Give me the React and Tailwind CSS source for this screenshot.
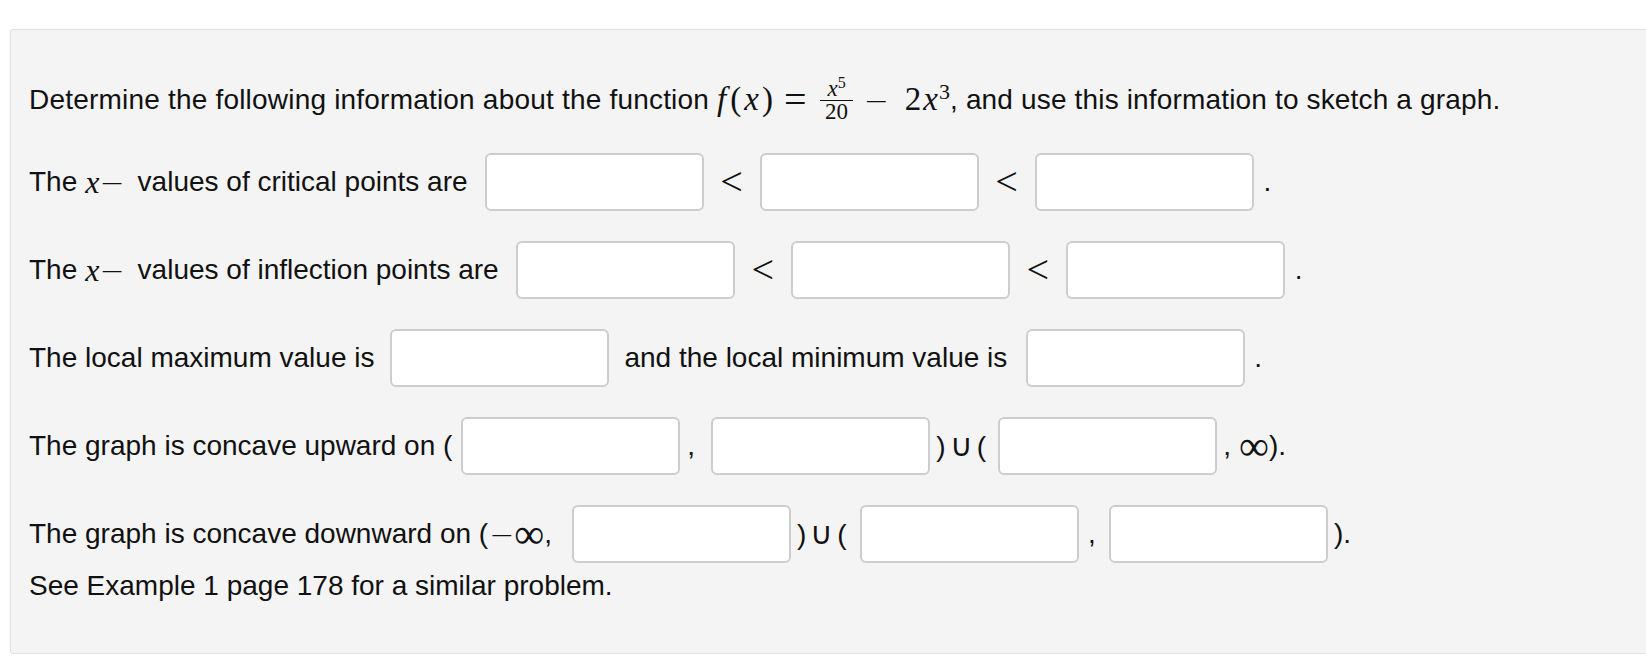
import React from 'react';

// one answer field, as in the reference
function Box({ className = '' }) {
  return (
    <input
      type="text"
      className={`block w-[219px] h-[58px] shrink-0 bg-white border-2 border-[#cdcdcd] rounded-[6px] outline-none ${className}`}
    />
  );
}

function X() {
  return <span className="font-['Liberation_Serif',serif] italic text-[32px]">x</span>;
}

function Minus({ className = '' }) {
  return <span className={`font-['DejaVu_Sans',sans-serif] text-[30px] font-light ${className}`}>−</span>;
}

function Inf() {
  return <span className="font-['Liberation_Serif',serif] text-[42px] leading-none">∞</span>;
}

function Sep({ children, className = '' }) {
  return <span className={`shrink-0 ${className}`}>{children}</span>;
}

const mathCls = "font-['Liberation_Serif',serif] text-[33px]";
const ltCls = "font-['Liberation_Serif',serif] text-[40px] font-light w-[56px] text-center";

function Cup() {
  return (
    <>
      )<span className="font-['Liberation_Serif',serif] text-[31px] mx-[4px]">∪</span>(
    </>
  );
}

export default function App() {
  return (
    <div className="min-h-[662px] bg-white overflow-hidden pt-[29px] pl-[10px] font-['Liberation_Sans',Arial,sans-serif] text-[28px] text-[#111]">
      <div className="bg-[#f4f4f4] border border-r-0 border-[#e1e1e1] rounded-l-[4px] shadow-[0_0_2px_rgba(0,0,0,0.06)] pt-[50px] pb-[47px] pl-[18px] whitespace-nowrap">
        {/* intro line */}
        <div className="flex items-center h-[40px]">
          <span className="tracking-[0.2px]">Determine the following information about the function</span>
          <span className={`${mathCls} ml-[8px]`}>
            <i className="mr-[4px]">f</i>(<i className="mx-[3px]">x</i>)
          </span>
          <span className={`${mathCls} text-[40px] ml-[11px] mr-[14px]`}>=</span>
          <span className="inline-flex flex-col items-center font-['Liberation_Serif',serif] text-[23px] leading-[22px]">
            <span className="border-b-[1.5px] border-[#111] px-[7px]">
              <i>x</i>
              <sup className="text-[16px]">5</sup>
            </span>
            <span>20</span>
          </span>
          <Minus className="ml-[11px] mr-[16px]" />
          <span className={mathCls}>
            2<i className="ml-[2px] mr-[1px]">x</i>
            <sup className="text-[22px]">3</sup>
          </span>
          <span className="tracking-[0.16px]">, and use this information to sketch a graph.</span>
        </div>

        {/* critical points */}
        <div className="flex items-center h-[58px] mt-[33px]">
          <span>The</span>
          <span className="ml-[8px]"><X /></span>
          <Minus className="mr-[13px]" />
          <span>values of critical points are</span>
          <Box className="ml-[17px]" />
          <Sep className={ltCls}>&lt;</Sep>
          <Box />
          <Sep className={ltCls}>&lt;</Sep>
          <Box />
          <Sep className="ml-[10px]">.</Sep>
        </div>

        {/* inflection points */}
        <div className="flex items-center h-[58px] mt-[30px]">
          <span>The</span>
          <span className="ml-[8px]"><X /></span>
          <Minus className="mr-[13px]" />
          <span>values of inflection points are</span>
          <Box className="ml-[17px]" />
          <Sep className={ltCls}>&lt;</Sep>
          <Box />
          <Sep className={ltCls}>&lt;</Sep>
          <Box />
          <Sep className="ml-[10px]">.</Sep>
        </div>

        {/* local extrema */}
        <div className="flex items-center h-[58px] mt-[30px]">
          <span>The local maximum value is</span>
          <Box className="ml-[16px]" />
          <span className="ml-[15px]">and the local minimum value is</span>
          <Box className="ml-[19px]" />
          <Sep className="ml-[9px]">.</Sep>
        </div>

        {/* concave up */}
        <div className="flex items-center h-[58px] mt-[30px]">
          <span>The graph is concave upward on (</span>
          <Box className="ml-[9px]" />
          <Sep className="w-[31px] pl-[7px]">,</Sep>
          <Box />
          <Sep className="w-[68px] pl-[6px]">
            <Cup />
          </Sep>
          <Box />
          <Sep className="ml-[6px] flex items-center">
            ,&nbsp;<Inf />).
          </Sep>
        </div>

        {/* concave down */}
        <div className="flex items-center h-[58px] mt-[30px]">
          <span className="flex items-center">
            The graph is concave downward on (<Minus className="ml-[1px]" />
            <Inf />,
          </span>
          <Box className="ml-[20px]" />
          <Sep className="w-[69px] pl-[6px]">
            <Cup />
          </Sep>
          <Box />
          <Sep className="w-[30px] pl-[9px]">,</Sep>
          <Box />
          <Sep className="ml-[6px]">).</Sep>
        </div>

        <div className="h-[40px] leading-[40px] mt-[3px]">See Example 1 page 178 for a similar problem.</div>
      </div>
    </div>
  );
}
